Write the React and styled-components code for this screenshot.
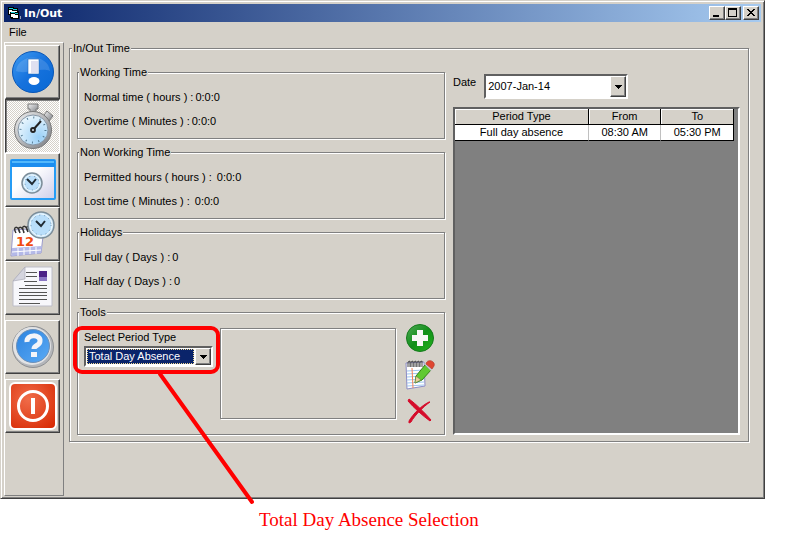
import { useState } from 'react';
import styled, { createGlobalStyle, css } from 'styled-components';

const toolGroups = [
	[
		{ id: 'alert', label: 'Information', Icon: AlertIcon },
		{ id: 'time', label: 'In/Out time', Icon: StopwatchIcon },
		{ id: 'schedule', label: 'Schedule', Icon: WindowClockIcon },
		{ id: 'calendar', label: 'Calendar', Icon: CalendarIcon },
		{ id: 'report', label: 'Report', Icon: ReportIcon },
	],
	[{ id: 'help', label: 'Help', Icon: HelpIcon }],
	[{ id: 'exit', label: 'Exit', Icon: PowerIcon }],
];

const summaries = [
	{
		title: 'Working Time',
		rows: [
			{ name: 'Normal time ( hours ) :', value: '0:0:0' },
			{ name: 'Overtime ( Minutes ) :', value: '0:0:0' },
		],
	},
	{
		title: 'Non Working Time',
		wide: true,
		rows: [
			{ name: 'Permitted hours ( hours ) :', value: '0:0:0' },
			{ name: 'Lost time ( Minutes ) :', value: '0:0:0' },
		],
	},
	{
		title: 'Holidays',
		rows: [
			{ name: 'Full day ( Days ) :', value: '0' },
			{ name: 'Half day ( Days ) :', value: '0' },
		],
	},
];

const periods = [{ type: 'Full day absence', from: '08:30 AM', to: '05:30 PM' }];

function App() {
	const [active, setActive] = useState('time');

	return (
		<>
			<GlobalStyle />
			<Window>
				<TitleBar>
					<FormIcon />
					<Title>In/Out</Title>
					<Caption aria-label="Minimize">
						<svg width="12" height="10" viewBox="0 0 12 10" shapeRendering="crispEdges">
							<path d="M2 7h6v2H2z" />
						</svg>
					</Caption>
					<Caption aria-label="Maximize">
						<svg width="12" height="10" viewBox="0 0 12 10" shapeRendering="crispEdges">
							<path d="M1 0h9v9H1zM2 2v6h7V2z" fillRule="evenodd" />
						</svg>
					</Caption>
					<Caption aria-label="Close" $apart>
						<svg width="12" height="10" viewBox="0 0 12 10" shapeRendering="crispEdges">
							<path d="M2 1h2v1h1v1h2V2h1V1h2v1H9v1H8v1H7v1h1v1h1v1h1v1H8V7H7V6H5v1H4v1H2V7h1V6h1V5h1V4H4V3H3V2H2z" />
						</svg>
					</Caption>
				</TitleBar>
				<MenuBar>
					<MenuItem>File</MenuItem>
				</MenuBar>
				<Body>
					<Sidebar>
						{toolGroups.map((group) => (
							<ToolGroup key={group[0].id}>
								{group.map(({ id, label, Icon }) => (
									<ToolButton
										key={id}
										aria-label={label}
										$pressed={active === id}
										onClick={() => setActive(id)}
									>
										<Icon />
									</ToolButton>
								))}
							</ToolGroup>
						))}
					</Sidebar>
					<Main>
						<TimeGroup>
							<Legend>In/Out Time</Legend>
							<Columns>
								<Stack>
									{summaries.map((summary) => (
										<SummaryGroup key={summary.title} {...summary} />
									))}
									<PeriodTools />
								</Stack>
								<Records />
							</Columns>
						</TimeGroup>
					</Main>
				</Body>
			</Window>
			<Note>Total Day Absence Selection</Note>
		</>
	);
}

export default App;

function SummaryGroup({ title, rows, wide }) {
	return (
		<Group>
			<Legend>{title}</Legend>
			<Rows>
				{rows.map((row) => (
					<Row key={row.name} $wide={wide}>
						<span>{row.name}</span>
						<span>{row.value}</span>
					</Row>
				))}
			</Rows>
		</Group>
	);
}

function PeriodTools() {
	return (
		<ToolsGroup>
			<Legend>Tools</Legend>
			<ToolsLayout>
				<PeriodField>
					<label htmlFor="period">Select Period Type</label>
					<Combo>
						<SelectedBox id="period" defaultValue="total">
							<option value="total">Total Day Absence</option>
						</SelectedBox>
						<Arrow />
					</Combo>
					<Highlight />
					<Pointer width="100" height="136" viewBox="0 0 100 136">
						<path d="M2 2L94 130" stroke="#f00" strokeWidth="4" strokeLinecap="round" />
					</Pointer>
				</PeriodField>
				<Details />
				<Actions>
					<IconButton aria-label="Add">
						<AddIcon />
					</IconButton>
					<IconButton aria-label="Edit">
						<EditIcon />
					</IconButton>
					<IconButton aria-label="Delete">
						<DeleteIcon />
					</IconButton>
				</Actions>
			</ToolsLayout>
		</ToolsGroup>
	);
}

function Records() {
	return (
		<RecordsColumn>
			<DateRow>
				<label htmlFor="date">Date</label>
				<DateCombo>
					<DateBox id="date" defaultValue="2007-Jan-14">
						<option>2007-Jan-14</option>
					</DateBox>
					<Arrow />
				</DateCombo>
			</DateRow>
			<Grid>
				<Table>
					<thead>
						<tr>
							<HeadCell $width="48%">Period Type</HeadCell>
							<HeadCell $width="26%">From</HeadCell>
							<HeadCell $width="26%">To</HeadCell>
						</tr>
					</thead>
					<tbody>
						{periods.map((period) => (
							<tr key={period.from}>
								<Cell>{period.type}</Cell>
								<Cell>{period.from}</Cell>
								<Cell>{period.to}</Cell>
							</tr>
						))}
					</tbody>
				</Table>
			</Grid>
		</RecordsColumn>
	);
}

function Arrow() {
	return (
		<ArrowBox aria-hidden="true">
			<svg width="7" height="4" viewBox="0 0 7 4" shapeRendering="crispEdges">
				<path d="M0 0h7v1H6v1H5v1H4v1H3V3H2V2H1V1H0z" />
			</svg>
		</ArrowBox>
	);
}

function FormIcon() {
	return (
		<svg width="16" height="14" viewBox="0 0 16 14" shapeRendering="crispEdges">
			<path d="M0 1h6v1h4v3h1v8H3v-1H2V9H0z" />
			<path d="M1 2h4v1h4v1H5V3H1z" fill="#19d5dd" />
			<path d="M1 4h3v1h5v1H2v2H1z" fill="#fff" />
			<path d="M3 6h4v1h3v1H7V7H3z" fill="#19d5dd" />
			<path d="M3 8h4v1h3v3H5v-1H3z" fill="#fff" />
			<path d="M12 10h1v3h-1z" fill="#9aa0ae" />
		</svg>
	);
}

function AlertIcon() {
	return (
		<svg width="44" height="44" viewBox="0 0 44 44">
			<defs>
				<linearGradient id="alertFill" x1="0" y1="0" x2="1" y2="1">
					<stop offset="0" stopColor="#3f9cf2" />
					<stop offset="0.5" stopColor="#1672dd" />
					<stop offset="1" stopColor="#0868d4" />
				</linearGradient>
			</defs>
			<circle cx="22" cy="22" r="20.5" fill="url(#alertFill)" stroke="#0755b6" />
			<path d="M5 21C7 3 37 3 39 21C29 17 15 25 5 21z" fill="#fff" opacity="0.14" />
			<path d="M17 9h11v15H17z" fill="#fff" stroke="#1d66be" strokeWidth="0.6" />
			<path d="M20 11h7v12h-7z" fill="#dfe0f0" />
			<ellipse cx="23" cy="31" rx="5.5" ry="4" fill="#fff" />
		</svg>
	);
}

function StopwatchIcon() {
	return (
		<svg width="44" height="48" viewBox="0 0 44 48">
			<defs>
				<linearGradient id="steel" x1="0" y1="0" x2="1" y2="1">
					<stop offset="0" stopColor="#f2f2f2" />
					<stop offset="1" stopColor="#777a80" />
				</linearGradient>
				<radialGradient id="dial" cx="0.7" cy="0.75" r="0.8">
					<stop offset="0" stopColor="#99d0f8" />
					<stop offset="1" stopColor="#eaf6fd" />
				</radialGradient>
			</defs>
			<path d="M17 2h10v5h-2v4h-6V7h-2z" fill="url(#steel)" stroke="#777" />
			<path d="M33 13l3-4 6 5-4 5-5-3z" fill="url(#steel)" stroke="#777" />
			<circle cx="22" cy="28" r="18.5" fill="url(#steel)" stroke="#777" />
			<circle cx="22" cy="28" r="15" fill="url(#dial)" stroke="#8696a6" />
			<circle cx="22" cy="28" r="12.5" fill="none" stroke="#527992" strokeWidth="2" strokeDasharray="1 5.54" />
			<path d="M22 28l8-9" stroke="#222" strokeWidth="2" />
			<circle cx="22" cy="28" r="2" fill="#cfd8e2" stroke="#222" strokeWidth="1.8" />
		</svg>
	);
}

function ClockFace({ cx, cy, r }) {
	return (
		<g>
			<circle cx={cx} cy={cy} r={r} fill="#cde8fa" stroke="#7c8d99" strokeWidth="1.5" />
			<circle cx={cx} cy={cy} r={r - 2} fill="#b9defa" stroke="#eff8fd" />
			<circle
				cx={cx}
				cy={cy}
				r={r - 3}
				fill="none"
				stroke="#6f92ac"
				strokeDasharray="1 4"
			/>
			<path
				d={`M${cx - 5} ${cy - 4}l5 5 4-5`}
				fill="none"
				stroke="#202b33"
				strokeWidth="2"
			/>
		</g>
	);
}

function WindowClockIcon() {
	return (
		<svg width="46" height="42" viewBox="0 0 46 42">
			<defs>
				<linearGradient id="sheet" x1="0" y1="0" x2="1" y2="1">
					<stop offset="0.4" stopColor="#fff" />
					<stop offset="1" stopColor="#cdcde9" />
				</linearGradient>
			</defs>
			<rect x="1" y="1" width="44" height="39" rx="1" fill="url(#sheet)" stroke="#259cf5" strokeWidth="2" />
			<path d="M1 1h44v7H1z" fill="#1b8def" />
			<path d="M2 2h42v2H2z" fill="#53b8fb" />
			<ClockFace cx={22} cy={24} r={10} />
		</svg>
	);
}

function CalendarIcon() {
	return (
		<svg width="46" height="48" viewBox="0 0 46 48">
			<path d="M3 20l31-2-3 25-30 3z" fill="#fff" stroke="#9a9acb" />
			<path d="M2 38l30-2-1 7-29 3z" fill="#b4b9e8" />
			<path d="M2 42l29-2M8 38v8M14 38v7M20 37v7M26 37v7" stroke="#fff" />
			<path
				d="M6 23c-4-7 2-8 4 0M10 23c-4-7 2-8 4 0M14 22c-4-7 2-8 4 0M18 22c-4-7 2-8 4 0"
				fill="none"
				stroke="#333"
				strokeWidth="1.5"
			/>
			<text x="6" y="36" fill="#f04b10" fontFamily="DejaVu Sans, sans-serif" fontSize="13" fontWeight="bold">
				12
			</text>
			<ClockFace cx={31} cy={15} r={13} />
		</svg>
	);
}

function ReportIcon() {
	return (
		<svg width="44" height="46" viewBox="0 0 44 46">
			<path d="M14 2h27v39H2V16z" fill="#f7f7fb" stroke="#bdbdc8" />
			<path d="M14 2v12L2 16z" fill="#d4d4de" stroke="#aaaab8" strokeWidth="0.7" />
			<path
				d="M15 7h11M15 11h11M13 16h13"
				stroke="#555"
				shapeRendering="crispEdges"
			/>
			<path d="M28 6h8v10h-8z" fill="#8a76c4" />
			<path d="M28 6h8v6h-8z" fill="#4c2287" />
			<path
				d="M14 20h22M8 23h28M8 27h28M8 30h28M8 34h28M8 38h21"
				stroke="#555"
				shapeRendering="crispEdges"
			/>
		</svg>
	);
}

function HelpIcon() {
	return (
		<svg width="44" height="46" viewBox="0 0 44 46">
			<defs>
				<linearGradient id="helpFill" x1="0" y1="0" x2="1" y2="1">
					<stop offset="0" stopColor="#2d83df" />
					<stop offset="1" stopColor="#5aaaf5" />
				</linearGradient>
			</defs>
			<circle cx="22" cy="23" r="20.5" fill="#b4b6ba" stroke="#8e9093" />
			<circle cx="21" cy="22" r="19" fill="#e2e3e5" />
			<circle cx="22" cy="22" r="16.5" fill="url(#helpFill)" stroke="#6d90b8" />
			<path
				d="M16 18C15 10 30 10 29 17c0 5-6 4-6 8"
				fill="none"
				stroke="#f3f4f9"
				strokeWidth="5"
			/>
			<path d="M20 28h6v5h-6z" fill="#f3f4f9" />
		</svg>
	);
}

function PowerIcon() {
	return (
		<svg width="48" height="48" viewBox="0 0 48 48">
			<defs>
				<radialGradient id="powerFill" cx="0.4" cy="0.35" r="0.8">
					<stop offset="0" stopColor="#f06c49" />
					<stop offset="1" stopColor="#d82b05" />
				</radialGradient>
			</defs>
			<rect x="1" y="1" width="46" height="46" rx="5" fill="url(#powerFill)" stroke="#fff" strokeWidth="2" />
			<circle cx="24" cy="24" r="14.5" fill="none" stroke="#fff" strokeWidth="3" />
			<path d="M22 16h4v16h-4z" fill="#fff" />
		</svg>
	);
}

function AddIcon() {
	return (
		<svg width="28" height="28" viewBox="0 0 28 28">
			<defs>
				<linearGradient id="addFill" x1="0" y1="0" x2="1" y2="1">
					<stop offset="0" stopColor="#50a957" />
					<stop offset="0.5" stopColor="#118f19" />
					<stop offset="1" stopColor="#25b51d" />
				</linearGradient>
			</defs>
			<circle cx="14" cy="14" r="13.5" fill="url(#addFill)" stroke="#157a1c" />
			<path d="M11 6h6v5h5v6h-5v5h-6v-5H6v-6h5z" fill="#f7f7f7" />
		</svg>
	);
}

function EditIcon() {
	return (
		<svg width="30" height="30" viewBox="0 0 30 30">
			<path d="M1 3l18-1 1 24-18 3z" fill="#fff" stroke="#8c8cc4" />
			<path d="M2 11l17-1M2 14l17-1M2 17l17-1M2 20l17-1M2 23l17-1M2 26l17-1" stroke="#9ec5f0" />
			<path d="M7 8l1 20" stroke="#f28055" />
			<path
				d="M3 7V2l2-1v6M6 7V2l2-1v6M9 7V2l2-1v6M12 7V2l2-1v6M15 7V2l2-1v6"
				fill="none"
				stroke="#444"
			/>
			<path d="M11 16L20 5l6 5-9 10-7 3z" fill="#60c931" stroke="#348516" />
			<path d="M11 16l5 4-6 3z" fill="#e8cf9b" stroke="#60813f" strokeWidth="0.6" />
			<path d="M20 5l2-2 6 5-2 3z" fill="#c7c8d5" />
			<path d="M21 4c1-6 10-3 8 2l-2 3z" fill="#df4631" stroke="#b53d30" strokeWidth="0.7" />
		</svg>
	);
}

function DeleteIcon() {
	return (
		<svg width="26" height="26" viewBox="0 0 26 26">
			<path d="M2 1C9 6 17 14 24 22l-1 1C16 18 7 10 1 3z" fill="#d50c2b" stroke="#d50c2b" />
			<path d="M23 4C16 9 8 17 4 24l-2 1 0-2C6 16 14 8 22 4z" fill="#d50c2b" stroke="#d50c2b" />
		</svg>
	);
}

const GlobalStyle = createGlobalStyle`
	* {
		box-sizing: border-box;
	}

	body {
		margin: 0;
		background: #fff;
		color: #000;
		font-family: 'Liberation Sans', Arial, sans-serif;
		font-size: 11px;
		line-height: 16px;
	}

	button,
	select {
		margin: 0;
		border-radius: 0;
		color: inherit;
		font: inherit;
	}

	svg {
		display: block;
		flex: none;
	}
`;

const raised = css`
	border: 1px solid;
	border-color: #fff #404040 #404040 #fff;
	box-shadow: inset -1px -1px 0 #808080;
	background: #d5d1c9;
`;

const sunken = css`
	border: 2px solid;
	border-color: #606060 #fff #fff #606060;
`;

const Window = styled.div`
	margin-right: 27px;
	padding: 3px 3px 2px;
	border: 1px solid;
	border-color: #d5d1c9 #404040 #404040 #d5d1c9;
	box-shadow: inset 1px 1px 0 #fff, inset -1px -1px 0 #808080;
	background: #d5d1c9;
`;

const TitleBar = styled.header`
	display: flex;
	align-items: center;
	height: 18px;
	padding: 0 2px 0 4px;
	background: linear-gradient(to right, #0a246a, #a6caf0);
`;

const Title = styled.h1`
	flex: 1;
	margin: 0;
	padding-top: 1px;
	color: #fff;
	font-family: 'DejaVu Sans', Verdana, sans-serif;
	font-size: 11px;
	font-weight: bold;
`;

const Caption = styled.button`
	${raised}
	width: 16px;
	height: 14px;
	margin-left: ${({ $apart }) => ($apart ? '2px' : '0')};
	padding: 1px;
`;

const MenuBar = styled.nav`
	display: flex;
	height: 19px;
`;

const MenuItem = styled.button`
	padding: 1px 5px 0;
	border: 0;
	background: none;
`;

const Body = styled.div`
	display: flex;
`;

const Sidebar = styled.aside`
	display: flex;
	flex-direction: column;
	gap: 5px;
	flex: none;
	margin-top: 1px;
	padding: 2px 3px 2px 0;
	border: 1px solid;
	border-color: #fff #808080 #808080 #fff;
`;

const ToolGroup = styled.div`
	display: flex;
	flex-direction: column;
`;

const ToolButton = styled.button`
	${raised}
	display: flex;
	align-items: center;
	justify-content: center;
	width: 55px;
	height: 54px;
	padding: 0;

	${({ $pressed }) =>
		$pressed &&
		css`
			border-color: #404040 #fff #fff #404040;
			box-shadow: inset 1px 1px 0 #808080;
			background: repeating-conic-gradient(#fff 0 25%, #d5d1c9 0 50%) 0 0 / 2px 2px;
		`}
`;

const Main = styled.main`
	flex: 1;
	min-width: 0;
	padding: 0 12px 54px 5px;
`;

const Group = styled.fieldset`
	min-width: 0;
	margin: 0;
	padding: 9px 6px;
	border: 1px solid #808080;
	box-shadow: 1px 1px 0 #fff, inset 1px 1px 0 #fff;
`;

const TimeGroup = styled(Group)`
	padding: 9px 8px 6px 7px;
`;

const ToolsGroup = styled(Group)`
	padding: 4px 9px 10px 6px;
`;

const Legend = styled.legend`
	height: 15px;
	margin-left: -5px;
	padding: 0 1px;
	background: #d5d1c9;
	line-height: 15px;
`;

const Columns = styled.div`
	display: grid;
	grid-template-columns: 368px minmax(0, 1fr);
	gap: 8px;
`;

const Stack = styled.div`
	display: flex;
	flex-direction: column;
	gap: 6px;
`;

const Rows = styled.div`
	display: flex;
	flex-direction: column;
	gap: 8px;
`;

const Row = styled.div`
	display: flex;
	gap: ${({ $wide }) => ($wide ? '5px' : '2px')};
`;

const ToolsLayout = styled.div`
	display: flex;
`;

const PeriodField = styled.div`
	position: relative;
	display: flex;
	flex-direction: column;
	gap: 1px;
	width: 136px;
	padding: 5px 7px 0 0;
`;

const Combo = styled.div`
	${sunken}
	display: flex;
	height: 21px;
	background: #fff;
`;

const ArrowBox = styled.span`
	${raised}
	display: flex;
	align-items: center;
	justify-content: center;
	flex: none;
	width: 16px;
	pointer-events: none;
`;

const Box = styled.select`
	flex: 1;
	min-width: 0;
	border: 0;
	outline: 0;
	appearance: none;
`;

const SelectedBox = styled(Box)`
	margin: 1px;
	padding: 0 1px;
	border: 1px dotted #f0d890;
	background: #0a246a;
	color: #fff;
	line-height: 13px;
`;

const DateBox = styled(Box)`
	padding: 0 2px 2px;
	background: #fff;
`;

const Highlight = styled.div`
	position: absolute;
	z-index: 1;
	top: 2px;
	left: -11px;
	width: 147px;
	height: 48px;
	border: 4px solid #f00;
	border-radius: 9px;
	pointer-events: none;
`;

const Pointer = styled.svg`
	position: absolute;
	z-index: 1;
	top: 48px;
	left: 74px;
	pointer-events: none;
`;

const Details = styled.div`
	flex: 1;
	margin: 4px 0 5px;
	border: 1px solid #808080;
	box-shadow: 1px 1px 0 #fff, inset 1px 1px 0 #fff;
`;

const Actions = styled.div`
	display: flex;
	flex-direction: column;
	align-items: center;
	gap: 8px;
	margin-left: 9px;
`;

const IconButton = styled.button`
	padding: 0;
	border: 0;
	background: none;
`;

const RecordsColumn = styled.section`
	display: flex;
	flex-direction: column;
	gap: 8px;
	padding-top: 9px;
`;

const DateRow = styled.div`
	display: flex;
	gap: 8px;
`;

const DateCombo = styled(Combo)`
	width: 144px;
	height: 25px;
`;

const Grid = styled.div`
	${sunken}
	flex: 1;
	background: #808080;
`;

const Table = styled.table`
	width: calc(100% - 4px);
	border-collapse: separate;
	border-spacing: 0;
	table-layout: fixed;
	text-align: center;
`;

const HeadCell = styled.th`
	width: ${({ $width }) => $width};
	padding: 0;
	border-right: 1px solid #000;
	border-bottom: 1px solid #000;
	box-shadow: inset 1px 1px 0 #fff;
	background: #d5d1c9;
	font-weight: normal;
	line-height: 15px;
`;

const Cell = styled.td`
	padding: 0;
	border-right: 1px solid #c0c0c0;
	border-bottom: 1px solid #000;
	background: #fff;
	line-height: 15px;

	&:last-child {
		border-right-color: #000;
	}
`;

const Note = styled.p`
	margin: 9px 0 0 259px;
	color: #f00;
	font-family: 'Liberation Serif', 'Times New Roman', serif;
	font-size: 19px;
	line-height: 24px;
`;
